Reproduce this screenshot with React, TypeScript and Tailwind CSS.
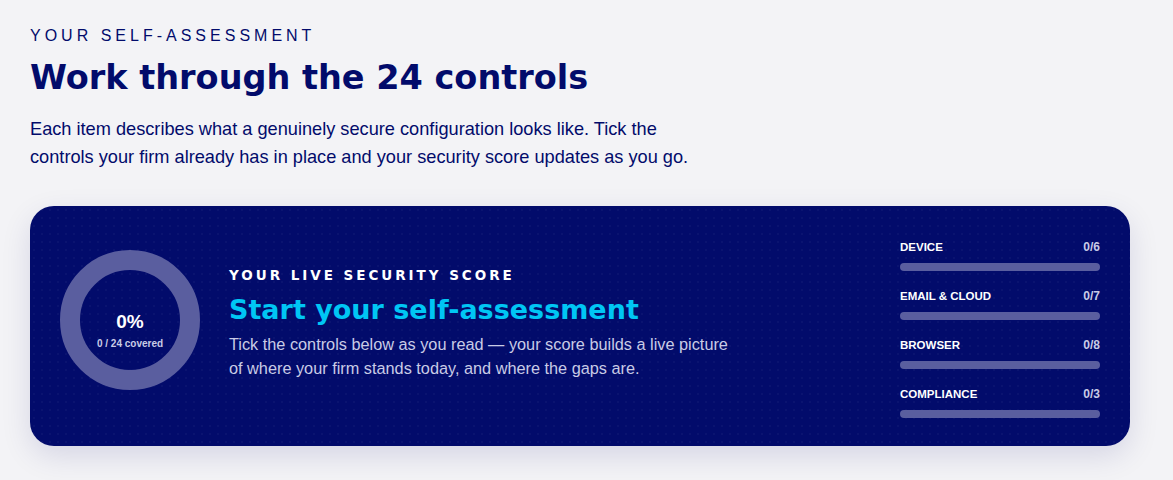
const categories = [
  { name: "DEVICE", done: 0, total: 6 },
  { name: "EMAIL & CLOUD", done: 0, total: 7 },
  { name: "BROWSER", done: 0, total: 8 },
  { name: "COMPLIANCE", done: 0, total: 3 },
];

function ScoreRing() {
  return (
    <div className="relative w-[140px] h-[140px] shrink-0 mb-[12px]">
      <svg width="140" height="140" viewBox="0 0 140 140">
        <circle cx="70" cy="70" r="60" fill="none" stroke="#5a5e9f" strokeWidth="20" />
      </svg>
      <div className="absolute inset-0 flex flex-col items-center justify-center pt-[20px]">
        <div className="text-[19px] font-bold text-white leading-none">0%</div>
        <div className="text-[10px] font-semibold text-[#c9cbe6] mt-[8px] leading-none">0 / 24 covered</div>
      </div>
    </div>
  );
}

export default function App() {
  return (
    <div className="min-h-[480px] bg-[#f3f3f6] px-[30px] pt-[27px] pb-[34px] text-[#020b6b] [font-family:'Liberation_Sans',Arial,sans-serif]">
      <div className="text-[16px] tracking-[0.25em] leading-[18px]">YOUR SELF-ASSESSMENT</div>
      <h1 className="mt-[13px] text-[33.5px] font-bold leading-[40px] [font-family:'DejaVu_Sans',sans-serif]">Work through the 24 controls</h1>
      <p className="mt-[17px] text-[18.2px] leading-[28px] max-w-[670px]">
        Each item describes what a genuinely secure configuration looks like. Tick the controls your firm already has in place and your security score updates as you go.
      </p>

      <div className="mt-[35px] w-[1100px] h-[240px] rounded-[24px] bg-[#020b6b] bg-[radial-gradient(rgba(255,255,255,0.03)_1px,transparent_1px)] bg-[length:8px_8px] shadow-[0_10px_30px_rgba(2,11,107,0.12)] flex items-center pl-[30px] pr-[30px]">
        <ScoreRing />
        <div className="ml-[29px] flex-1 pb-[6px]">
          <div className="text-[13.5px] font-bold tracking-[0.22em] text-white leading-[16px] [font-family:'DejaVu_Sans',sans-serif]">YOUR LIVE SECURITY SCORE</div>
          <div className="mt-[10px] text-[27px] font-bold text-[#00c6f4] leading-[34px] [font-family:'DejaVu_Sans',sans-serif]">Start your self-assessment</div>
          <p className="mt-[5px] text-[16.3px] leading-[24px] text-[#c9cbe6] max-w-[505px]">
            Tick the controls below as you read — your score builds a live picture of where your firm stands today, and where the gaps are.
          </p>
        </div>
        <div className="w-[200px] flex flex-col gap-[18px] pt-[6px]">
          {categories.map((c) => (
            <div key={c.name}>
              <div className="flex justify-between items-baseline leading-[14px]">
                <span className="text-[11.5px] font-bold text-white">{c.name}</span>
                <span className="text-[12px] font-bold text-[#c9cbe6]">{c.done}/{c.total}</span>
              </div>
              <div className="mt-[9px] h-[8px] rounded-full bg-[#5a5e9f]" />
            </div>
          ))}
        </div>
      </div>
    </div>
  );
}
